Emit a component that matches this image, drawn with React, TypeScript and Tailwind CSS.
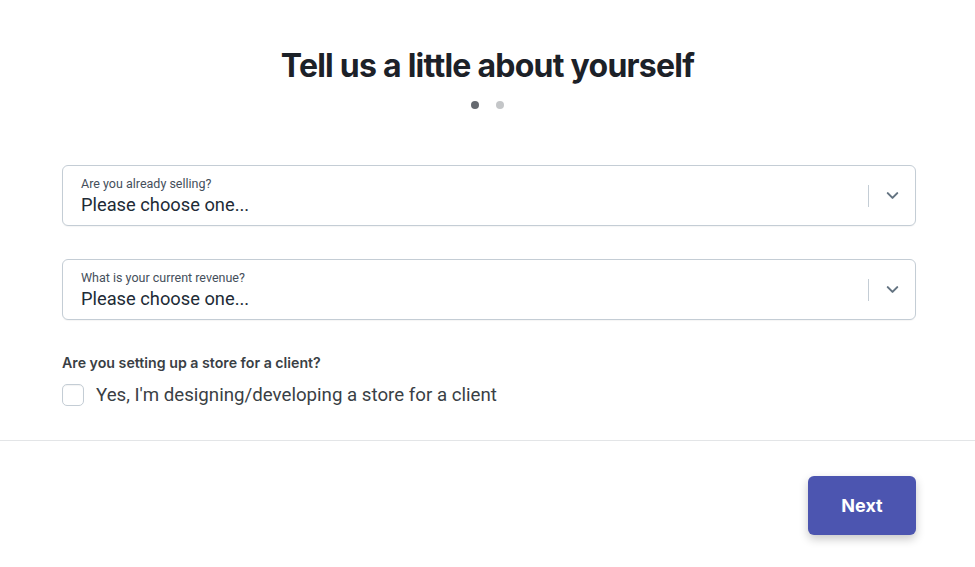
import { ChevronDown } from "lucide-react";

export default function App() {
  return (
    <div className="min-h-[567px] w-full bg-white font-['Inter',sans-serif] text-[#212b36]">
      <div className="flex flex-col items-center pt-[46px]">
        <h1 className="text-[32px] leading-[40px] font-bold tracking-[-0.75px] text-[#1c2128]">Tell us a little about yourself</h1>
        <div className="mt-[15px] flex gap-[17px]">
          <span className="h-[8px] w-[8px] rounded-full bg-[#666a70]" />
          <span className="h-[8px] w-[8px] rounded-full bg-[#c4c6c8]" />
        </div>
      </div>

      <div className="ml-[62px] mt-[56px] w-[854px]">
        <SelectField label="Are you already selling?" />
        <div className="mt-[33px]">
          <SelectField label="What is your current revenue?" />
        </div>

        <p className="mt-[35px] text-[14.2px] leading-[16px] font-semibold text-[#3a3f45]">Are you setting up a store for a client?</p>
        <label className="mt-[13px] flex items-center gap-[12px]">
          <span className="h-[22px] w-[22px] rounded-[5px] border border-[#c4cdd5] bg-white shadow-[inset_0_1px_1px_rgba(0,0,0,0.05)]" />
          <span className="font-['Roboto',sans-serif] text-[18.7px] leading-[22px] text-[#3a3f45]">Yes, I'm designing/developing a store for a client</span>
        </label>
      </div>

      <div className="mt-[34px] border-t border-[#e3e5e7]" />

      <div className="flex justify-end pr-[59px] pt-[35px]">
        <button className="h-[59px] w-[108px] rounded-[6px] bg-[#4c55b0] text-[18px] font-bold text-white shadow-[0_4px_10px_rgba(0,0,0,0.22)]" type="button">
          Next
        </button>
      </div>
    </div>
  );
}

function SelectField({ label }: { label: string }) {
  return (
    <div className="flex h-[61px] items-center rounded-[6px] border border-[#c4cdd5] bg-white shadow-[0_1px_1px_rgba(0,0,0,0.04)]">
      <div className="flex flex-1 flex-col pl-[18px] pt-[2px] font-['Roboto',sans-serif]">
        <span className="text-[12.5px] leading-[14px] text-[#454f5b]">{label}</span>
        <span className="mt-[3px] text-[18.3px] leading-[22px] text-[#212b36]">Please choose one...</span>
      </div>
      <span className="h-[22px] w-px bg-[#c4cdd5]" />
      <span className="flex w-[46px] items-center justify-center text-[#637381]">
        <ChevronDown className="h-[19px] w-[19px]" strokeWidth={2.6} aria-hidden />
      </span>
    </div>
  );
}
